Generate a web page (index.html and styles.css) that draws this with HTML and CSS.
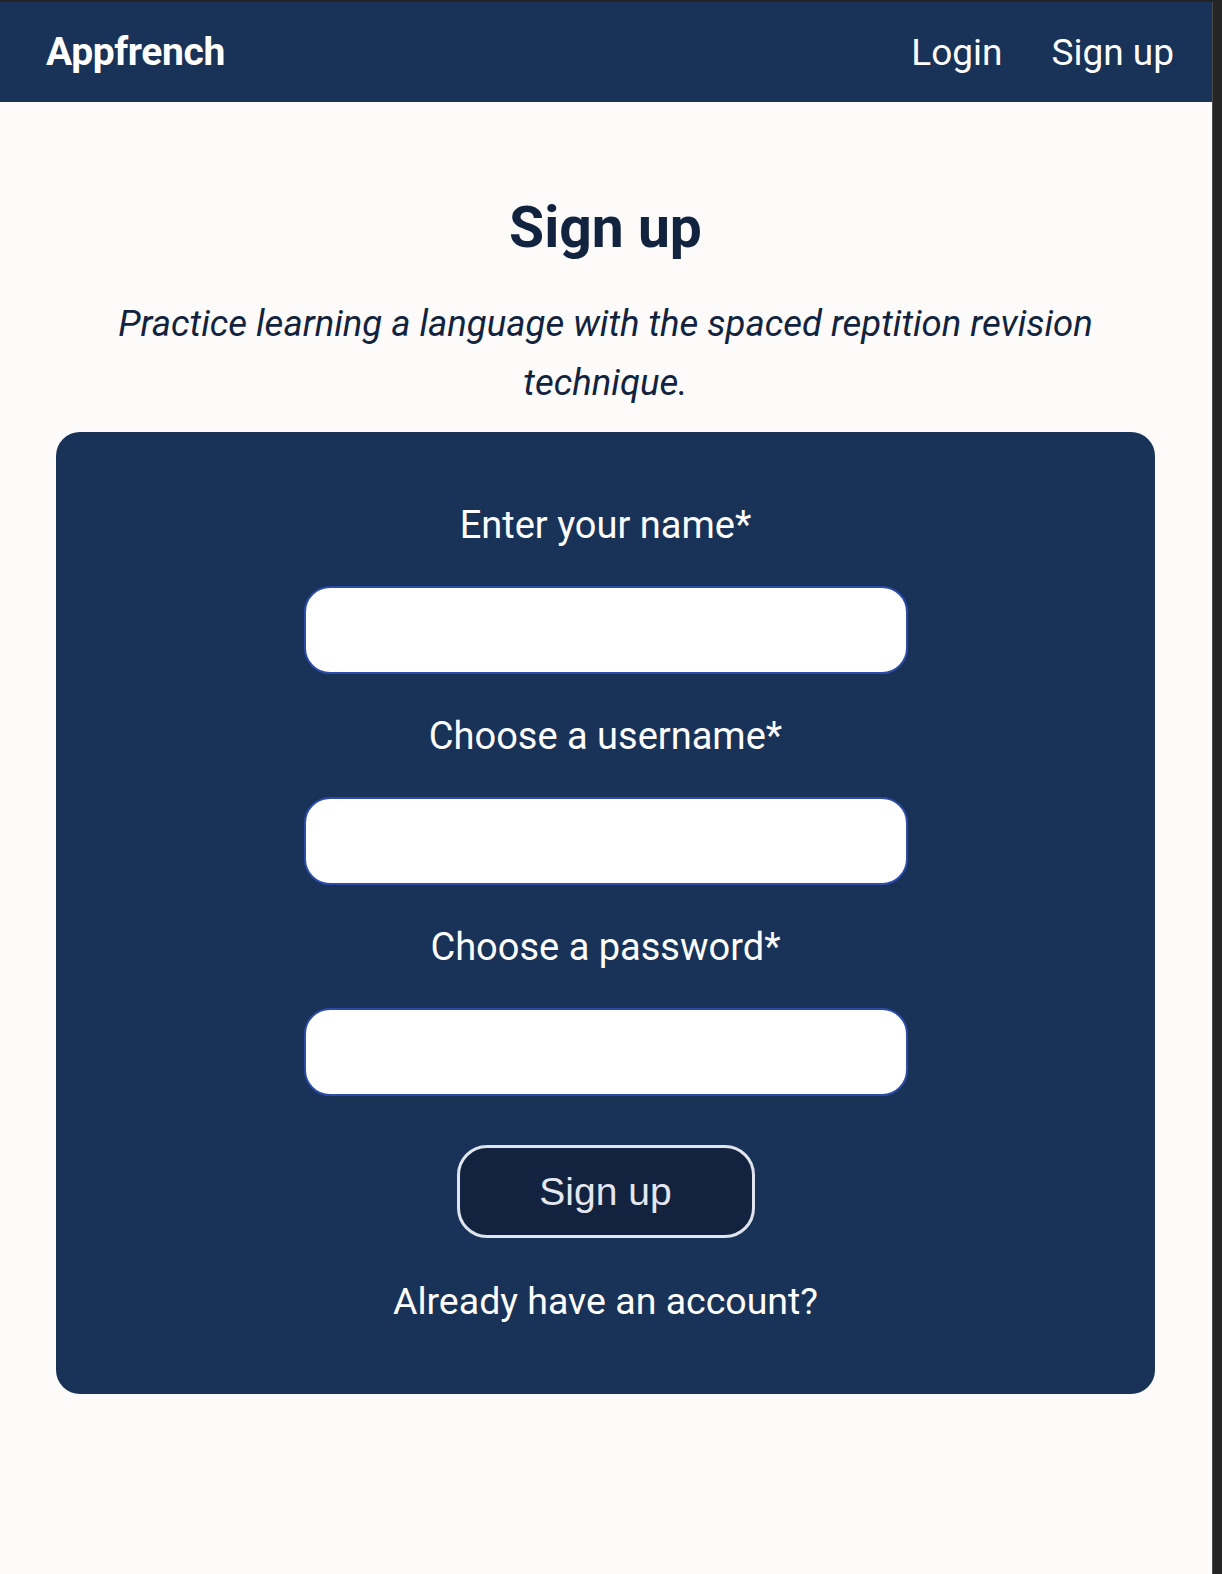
FILE: index.html
```html
<!DOCTYPE html>
<html lang="en">
<head>
<meta charset="utf-8">
<title>Appfrench - Sign up</title>
<link rel="stylesheet" href="styles.css">
</head>
<body>
<div class="page">
  <header class="navbar">
    <a class="brand" href="#">Appfrench</a>
    <nav class="nav-links">
      <a href="#">Login</a>
      <a href="#">Sign up</a>
    </nav>
  </header>
  <main class="main">
    <h1 class="title">Sign up</h1>
    <p class="subtitle">Practice learning a language with the spaced reptition revision technique.</p>
    <form class="card">
      <label class="field-label" for="name">Enter your name*</label>
      <input class="field-input" id="name" type="text">
      <label class="field-label" for="username">Choose a username*</label>
      <input class="field-input" id="username" type="text">
      <label class="field-label" for="password">Choose a password*</label>
      <input class="field-input" id="password" type="password">
      <button class="submit" type="button">Sign up</button>
      <a class="account-link" href="#">Already have an account?</a>
    </form>
  </main>
</div>
</body>
</html>
```
FILE: styles.css
```css
html {
  background: #252525;
  height: 100%;
}
body {
  margin: 0;
  padding-top: 2px;
  font-family: Roboto, "Noto Sans", sans-serif;
}
.page {
  width: 1213px;
  min-height: 1572px;
  background: #fcfbfa;
  border-right: 1px solid #4a4a4a;
  box-sizing: border-box;
}
.navbar {
  height: 100px;
  background: #183258;
  display: flex;
  align-items: center;
  justify-content: space-between;
  padding: 0 38px 0 46px;
  box-sizing: border-box;
}
.brand {
  color: #ffffff;
  text-decoration: none;
  font-weight: 700;
  font-size: 39px;
  letter-spacing: -0.4px;
}
.nav-links {
  display: flex;
  gap: 49px;
}
.nav-links a {
  color: #ffffff;
  text-decoration: none;
  font-size: 37px;
}
.main {
  display: flex;
  flex-direction: column;
  align-items: center;
  padding: 0 57px 0 56px;
}
.title {
  margin: 86px 0 0;
  font-size: 57px;
  line-height: 80px;
  font-weight: 700;
  color: #12233f;
}
.subtitle {
  margin: 26px 0 0;
  max-width: 1040px;
  text-align: center;
  font-style: italic;
  font-size: 36.5px;
  line-height: 59px;
  color: #12233f;
}
.card {
  margin-top: 20px;
  align-self: stretch;
  background: #183258;
  border-radius: 24px;
  padding: 69px 0;
  display: flex;
  flex-direction: column;
  align-items: center;
}
.field-label {
  color: #ffffff;
  font-size: 38px;
  line-height: 48px;
}
.field-input {
  margin: 37px 0 38px;
  width: 604px;
  height: 88px;
  box-sizing: border-box;
  border: 2px solid #2c4ca8;
  border-radius: 26px;
  background: #ffffff;
  font-size: 24px;
  padding: 0 20px;
}
.submit {
  margin-top: 11px;
  width: 298px;
  height: 93px;
  box-sizing: border-box;
  border: 3px solid #dfe4ef;
  border-radius: 30px;
  background: #13223e;
  color: #e3e7f1;
  font-family: "Liberation Sans", Arial, sans-serif;
  font-size: 39px;
}
.account-link {
  margin-top: 39px;
  color: #ffffff;
  text-decoration: none;
  font-size: 37.5px;
  line-height: 48px;
}
```
